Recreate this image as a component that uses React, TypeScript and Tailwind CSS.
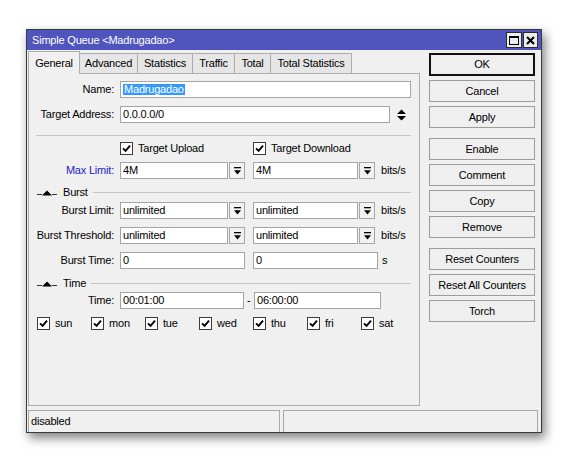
import type { ReactNode } from "react"

const font = "font-['Liberation_Sans',Arial,sans-serif]"

function Check() {
  return (
    <span className="flex h-[13px] w-[13px] shrink-0 items-center justify-center border border-[#3c3c3c] bg-white">
      <svg width="9" height="9" viewBox="0 0 9 9">
        <path d="M1 4.3 L3.6 6.9 L8 1.6" fill="none" stroke="#000" strokeWidth="1.9" />
      </svg>
    </span>
  )
}

function CheckItem({ label, className = "" }: { label: string; className?: string }) {
  return (
    <div className={`flex shrink-0 items-center gap-[5px] ${className}`}>
      <Check />
      <span>{label}</span>
    </div>
  )
}

function Field({ children, className = "" }: { children?: ReactNode; className?: string }) {
  return (
    <div className={`flex h-[17px] items-center border border-[#a5a5a5] bg-white pl-[2px] ${className}`}>
      {children}
    </div>
  )
}

function DropBtn() {
  return (
    <div className="ml-[1px] flex h-[17px] w-[16px] shrink-0 items-center justify-center border border-[#a5a5a5] bg-[#f2f2f2]">
      <svg width="7" height="8" viewBox="0 0 7 8">
        <rect x="0" y="0" width="7" height="1.3" />
        <path d="M0 3.2h7L3.5 7.6z" />
      </svg>
    </div>
  )
}

function Combo({ value, className = "" }: { value: string; className?: string }) {
  return (
    <div className={`flex shrink-0 ${className}`}>
      <Field className="min-w-0 flex-1">{value}</Field>
      <DropBtn />
    </div>
  )
}

function Row({
  label,
  children,
  className = "",
  labelClass = "",
}: {
  label?: string
  children: ReactNode
  className?: string
  labelClass?: string
}) {
  return (
    <div className={`flex h-[17px] items-center gap-[6px] ${className}`}>
      <span className={`w-[78px] shrink-0 text-right ${labelClass}`}>{label}</span>
      {children}
    </div>
  )
}

function Section({ title, className = "" }: { title: string; className?: string }) {
  return (
    <div className={`flex h-[13px] items-center ${className}`}>
      <svg width="20" height="8" viewBox="0 0 20 8" className="ml-[1px]">
        <path d="M0 5.5h5M15 5.5h5" stroke="#333" strokeWidth="1" />
        <path d="M5 6.5 L10 1.5 L15 6.5z" fill="#000" />
      </svg>
      <span className="ml-[6px]">{title}</span>
      <div className="ml-[5px] h-px flex-1 bg-[#c6c6c6]" />
    </div>
  )
}

function Btn({ children, className = "" }: { children: ReactNode; className?: string }) {
  return (
    <div
      className={`flex h-[22px] items-center justify-center border border-[#9c9c9c] bg-[#efefef] ${className}`}
    >
      {children}
    </div>
  )
}

const tabs = [
  { name: "General", w: "w-[52px]" },
  { name: "Advanced", w: "w-[58px]" },
  { name: "Statistics", w: "w-[55px]" },
  { name: "Traffic", w: "w-[42px]" },
  { name: "Total", w: "w-[36px]" },
  { name: "Total Statistics", w: "w-[81px]" },
]

const days = ["sun", "mon", "tue", "wed", "thu", "fri", "sat"]

export default function App() {
  return (
    <div
      className={`min-h-[458px] w-[569px] whitespace-nowrap bg-white pl-[26px] pt-[29px] text-[11px] leading-none tracking-[-0.2px] text-black ${font}`}
    >
      <div className="flex h-[404px] w-[516px] flex-col border border-[#3a3a3a] bg-[#f0f0f0] shadow-[3px_5px_10px_rgba(0,0,0,0.5)]">
        {/* title bar */}
        <div className="flex h-[20px] shrink-0 items-center justify-between bg-[#4f55bd] pl-[5px] pr-[3px] text-white">
          <span>Simple Queue &lt;Madrugadao&gt;</span>
          <div className="flex gap-[1px]">
            <div className="flex h-[16px] w-[16px] items-center justify-center border border-[#2b2b2b] bg-[#ececec]">
              <div className="h-[9px] w-[10px] border border-t-2 border-black" />
            </div>
            <div className="flex h-[16px] w-[15px] items-center justify-center border border-[#2b2b2b] bg-[#ececec]">
              <svg width="9" height="9" viewBox="0 0 9 9">
                <path d="M1 1L8 8M8 1L1 8" stroke="#000" strokeWidth="2" />
              </svg>
            </div>
          </div>
        </div>

        <div className="flex flex-1 pt-[3px]">
          {/* left: tabs + panel */}
          <div className="ml-[1px] flex w-[392px] flex-col">
            <div className="relative z-10 -mb-px flex h-[21px] items-end">
              {tabs.map((t, i) =>
                i === 0 ? (
                  <div
                    key={t.name}
                    className={`flex h-[23px] items-center justify-center border border-b-0 border-[#acacac] bg-[#f0f0f0] ${t.w}`}
                  >
                    {t.name}
                  </div>
                ) : (
                  <div
                    key={t.name}
                    className={`flex h-[21px] items-center justify-center border border-l-0 border-[#acacac] bg-[#e6e6e6] ${t.w}`}
                  >
                    {t.name}
                  </div>
                ),
              )}
            </div>
            <div className="flex h-[333px] flex-col border border-[#acacac] pl-[7px] pr-[8px] pt-[7px]">
              <Row label="Name:">
                <Field className="flex-1">
                  <span className="bg-[#3399ff] px-px text-white">Madrugadao</span>
                </Field>
              </Row>
              <Row label="Target Address:" className="mt-[8px]">
                <Field className="w-[270px]">0.0.0.0/0</Field>
                <svg width="9" height="12" viewBox="0 0 9 12" className="ml-[1px]">
                  <path d="M0 5L4.5 0.5L9 5z M0 7L4.5 11.5L9 7z" fill="#000" />
                </svg>
              </Row>
              <div className="mt-[12px] h-px bg-[#c6c6c6]" />
              <div className="mt-[6px] flex h-[13px] items-center pl-[84px]">
                <CheckItem label="Target Upload" className="w-[133px]" />
                <CheckItem label="Target Download" />
              </div>
              <Row label="Max Limit:" labelClass="text-[#2222c8]" className="mt-[7px]">
                <Combo value="4M" className="w-[125px]" />
                <Combo value="4M" className="ml-[2px] w-[122px]" />
                <span>bits/s</span>
              </Row>
              <Section title="Burst" className="mt-[7px]" />
              <Row label="Burst Limit:" className="mt-[3px]">
                <Combo value="unlimited" className="w-[125px]" />
                <Combo value="unlimited" className="ml-[2px] w-[122px]" />
                <span>bits/s</span>
              </Row>
              <Row label="Burst Threshold:" className="mt-[8px]">
                <Combo value="unlimited" className="w-[125px]" />
                <Combo value="unlimited" className="ml-[2px] w-[122px]" />
                <span>bits/s</span>
              </Row>
              <Row label="Burst Time:" className="mt-[8px]">
                <Field className="w-[125px]">0</Field>
                <Field className="ml-[2px] w-[125px]">0</Field>
                <span className="-ml-[2px]">s</span>
              </Row>
              <Section title="Time" className="mt-[8px]" />
              <Row label="Time:" className="mt-[2px]">
                <Field className="w-[124px]">00:01:00</Field>
                <span className="-ml-[3px] w-[4px]">-</span>
                <Field className="-ml-[3px] w-[127px]">06:00:00</Field>
              </Row>
              <div className="mt-[8px] flex h-[13px] pl-[1px]">
                {days.map((d) => (
                  <CheckItem key={d} label={d} className="w-[54px]" />
                ))}
              </div>
            </div>
          </div>

          {/* right: buttons */}
          <div className="ml-[9px] flex w-[106px] flex-col">
            <div className="flex h-[23px] items-center justify-center border-2 border-[#111] bg-[#efefef]">OK</div>
            <Btn className="mt-[4px]">Cancel</Btn>
            <Btn className="mt-[4px]">Apply</Btn>
            <Btn className="mt-[10px]">Enable</Btn>
            <Btn className="mt-[4px]">Comment</Btn>
            <Btn className="mt-[4px]">Copy</Btn>
            <Btn className="mt-[4px]">Remove</Btn>
            <Btn className="mt-[10px]">Reset Counters</Btn>
            <Btn className="mt-[4px]">Reset All Counters</Btn>
            <Btn className="mt-[4px]">Torch</Btn>
          </div>
        </div>

        {/* status bar */}
        <div className="mt-[3px] flex h-[22px] shrink-0 gap-[3px] pl-[1px] pr-[3px]">
          <div className="flex w-[252px] items-center border border-b-0 border-[#a8a8a8] pl-[2px]">disabled</div>
          <div className="flex-1 border border-b-0 border-[#a8a8a8]" />
        </div>
      </div>
    </div>
  )
}
